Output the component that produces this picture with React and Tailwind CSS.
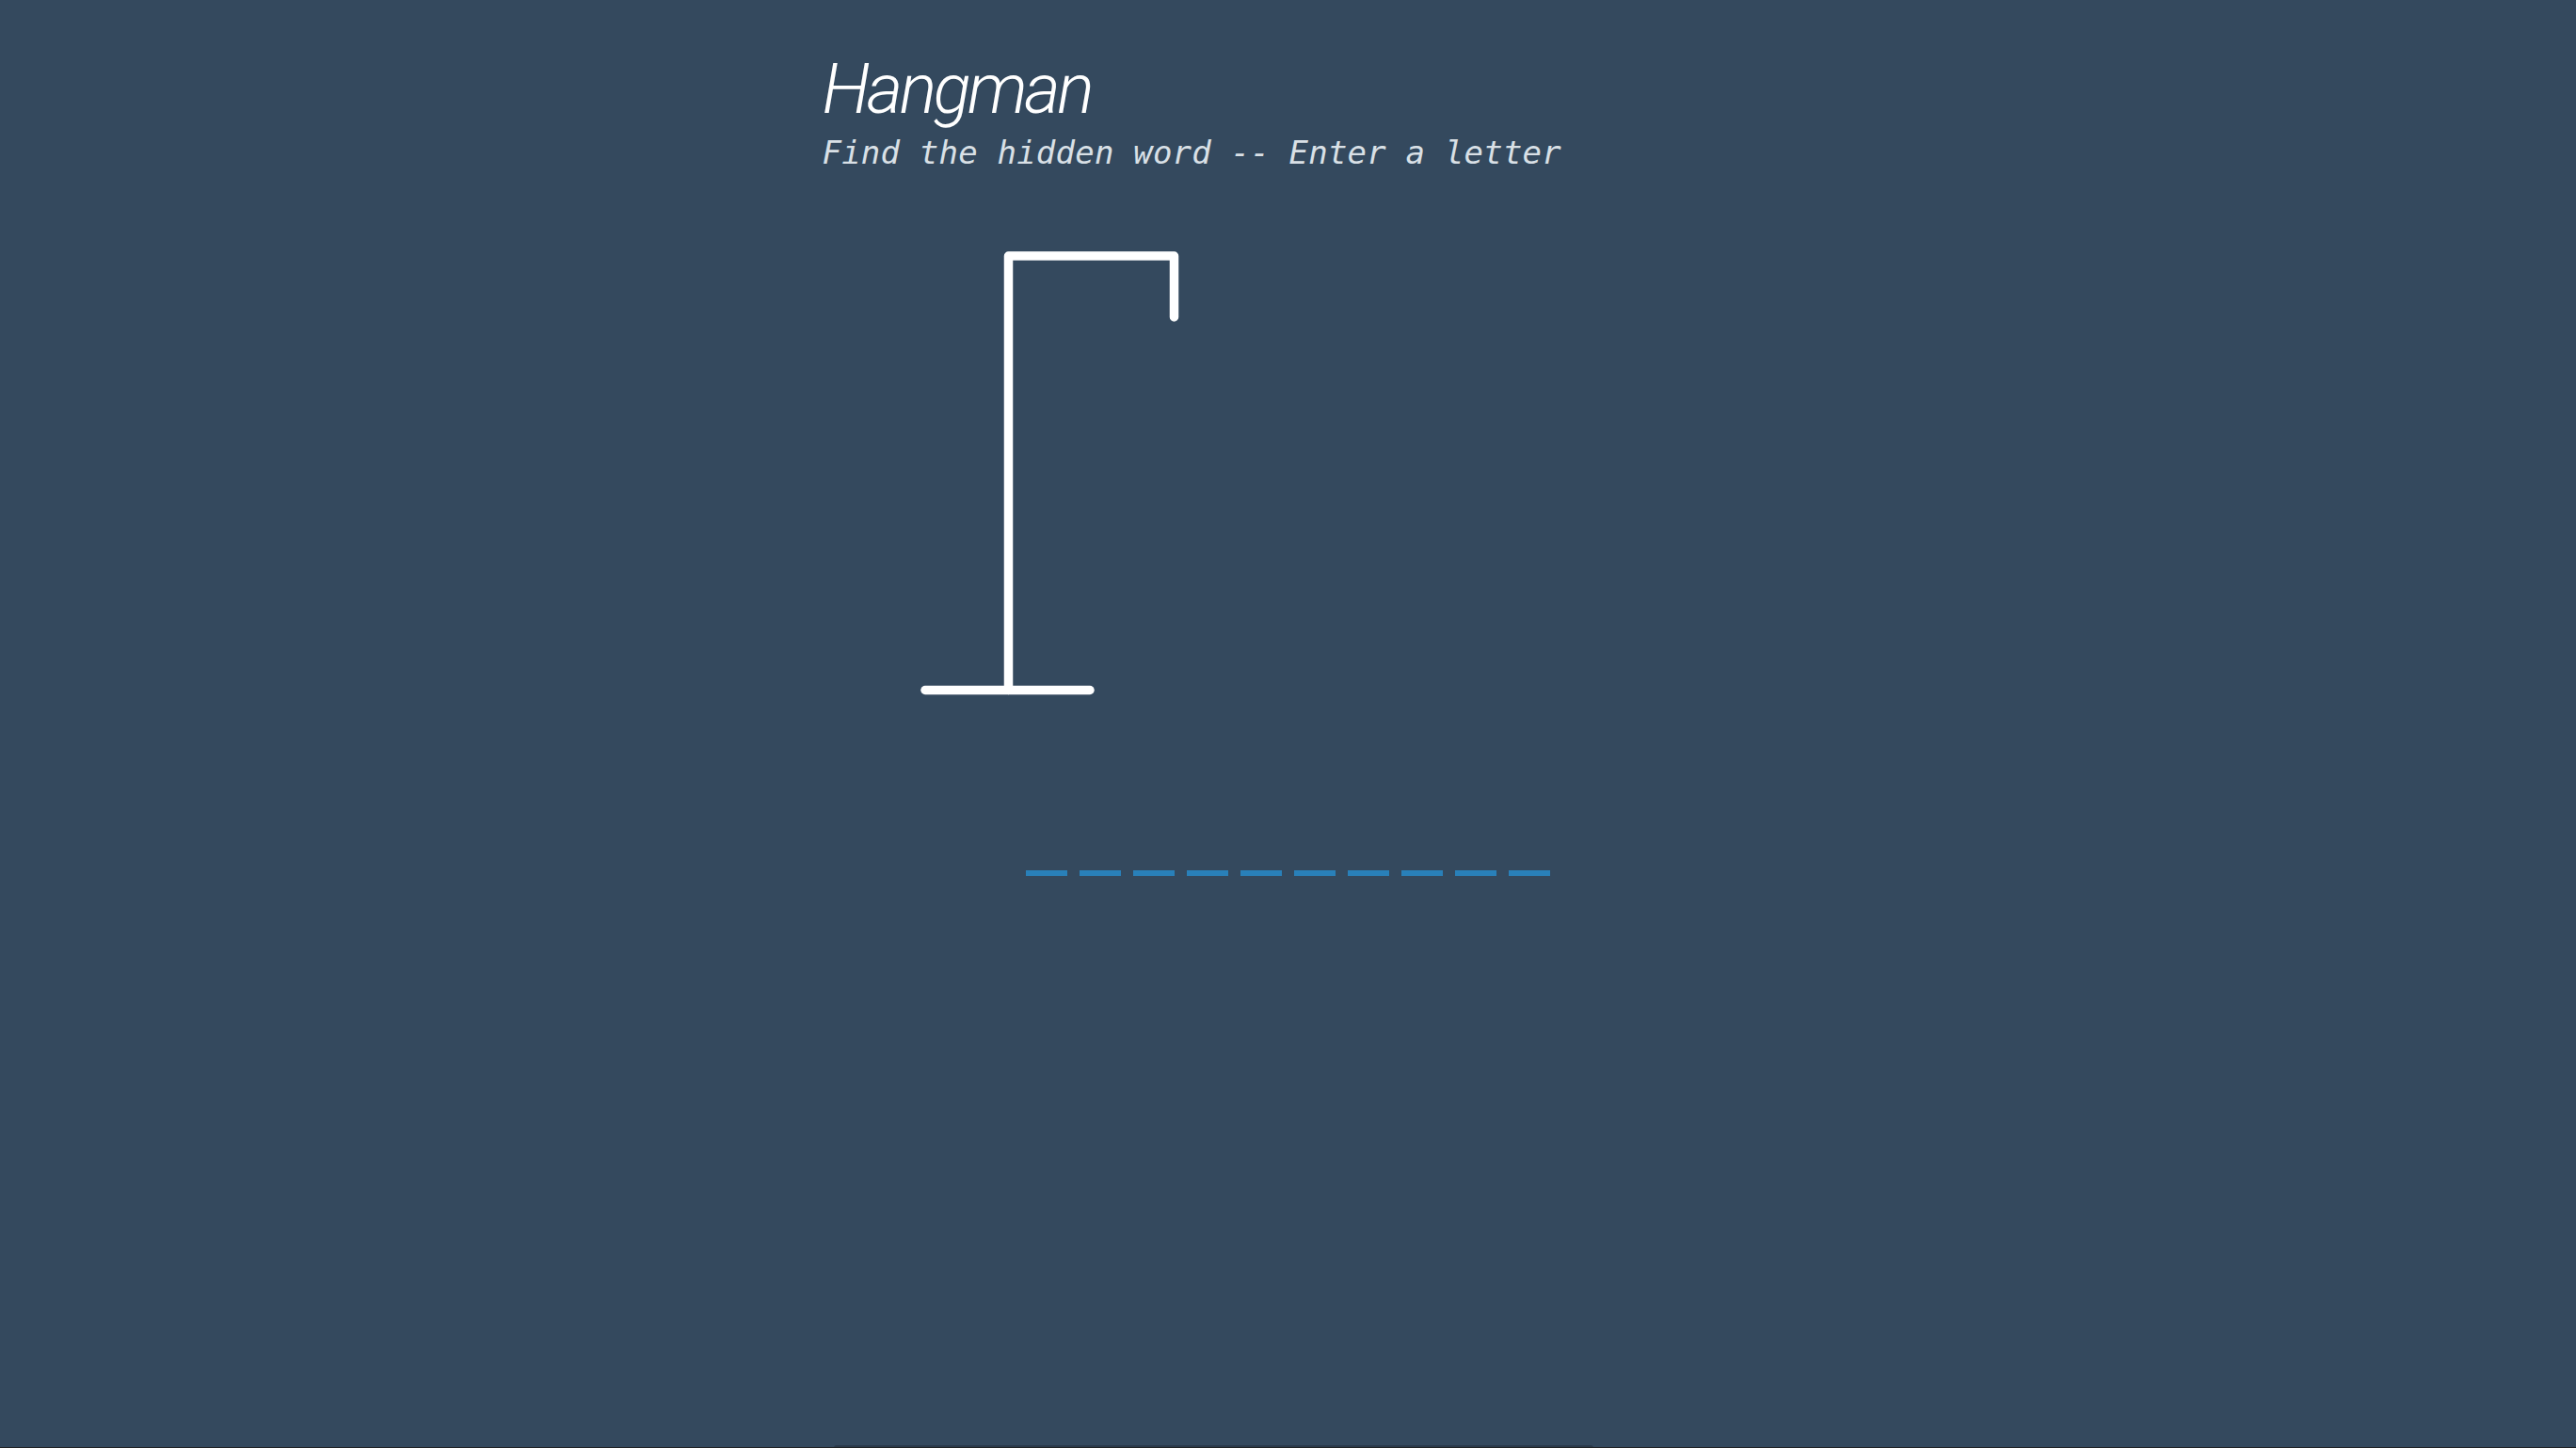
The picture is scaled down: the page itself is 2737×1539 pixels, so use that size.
export default function App() {
  const slots = Array.from({ length: 10 });
  return (
    <div className="min-h-screen w-full bg-[#34495e] relative overflow-hidden">
      <div className="w-[990px] mx-auto pt-[58px]">
        <h1
          className="text-white text-[74px] leading-none italic font-light tracking-[-3.5px]"
          style={{ fontFamily: "Roboto, 'Noto Sans', sans-serif" }}
        >
          Hangman
        </h1>
        <p
          className="mt-[13px] text-[34px] leading-none italic text-[#d9e0e6] tracking-[0.2px] whitespace-pre"
          style={{ fontFamily: "'DejaVu Sans Mono', 'Liberation Mono', monospace" }}
        >
          Find the hidden word -- Enter a letter
        </p>
        <svg
          className="mt-[81px] -ml-[1px] block"
          width="400"
          height="480"
          viewBox="0 0 400 480"
          fill="none"
        >
          <g stroke="#ffffff" strokeWidth="9.5" strokeLinecap="round" strokeLinejoin="round">
            <path d="M110 473.5 H285" />
            <path d="M198.5 473.5 V12 H374.5 V77" />
          </g>
        </svg>
        <div className="mt-[185px] ml-[216px] flex gap-[13px]">
          {slots.map((_, i) => (
            <div key={i} className="w-[44px] h-[6px] bg-[#2980b9]" />
          ))}
        </div>
      </div>
      <div className="absolute bottom-0 left-[886px] w-[807px] h-[3px] rounded-t-[3px] bg-[#2a3a4b]" />
      <div className="absolute bottom-0 left-0 w-full h-px bg-[#202326]" />
    </div>
  );
}
